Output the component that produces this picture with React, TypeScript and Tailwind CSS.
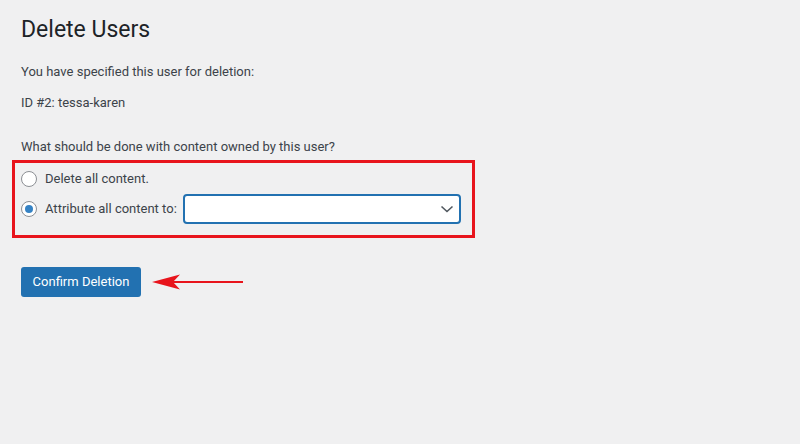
export default function App() {
  return (
    <div className="min-h-[444px] w-full bg-[#f0f0f1] pl-[21px] pt-[15px] font-['Roboto',sans-serif] text-[13px] text-[#3c434a]">
      <h1 className="text-[23px] leading-[30px] font-normal text-[#1d2327]">Delete Users</h1>
      <p className="mt-[17px] leading-[20px]">You have specified this user for deletion:</p>
      <p className="mt-[11px] leading-[20px]">ID #2: tessa-karen</p>
      <p className="mt-[24px] leading-[20px]">What should be done with content owned by this user?</p>

      <div className="-ml-[9px] mt-[3px] w-[463px] border-[3px] border-[#e8141c] pl-[6px] pt-[6px] pb-[11px]">
        <label className="flex h-[20px] items-center gap-[8px]">
          <span className="h-4 w-4 rounded-full border border-[#8c8f94] bg-white" />
          <span>Delete all content.</span>
        </label>
        <div className="mt-[5px] flex items-center">
          <span className="flex h-4 w-4 items-center justify-center rounded-full border border-[#8c8f94] bg-white">
            <span className="h-2 w-2 rounded-full bg-[#3582c4]" />
          </span>
          <span className="ml-[8px]">Attribute all content to:</span>
          <div className="ml-[6px] flex h-[30px] w-[278px] items-center justify-end rounded-[4px] border-2 border-[#2271b1] bg-white pr-[5px]">
            <svg width="14" height="8" viewBox="0 0 14 8" fill="none">
              <path d="M1.5 1.5 L7 6.5 L12.5 1.5" stroke="#50575e" strokeWidth="1.6" />
            </svg>
          </div>
        </div>
      </div>

      <div className="mt-[29px] flex items-center">
        <button className="h-[30px] w-[120px] rounded-[3px] bg-[#2271b1] text-[13px] text-white">
          Confirm Deletion
        </button>
        <svg className="ml-[11px]" width="92" height="16" viewBox="0 0 92 16">
          <path d="M0 8 L28 0.5 L21 8 L28 15.5 Z" fill="#e8141c" />
          <rect x="20" y="7" width="71" height="2" fill="#e8141c" />
        </svg>
      </div>
    </div>
  )
}
